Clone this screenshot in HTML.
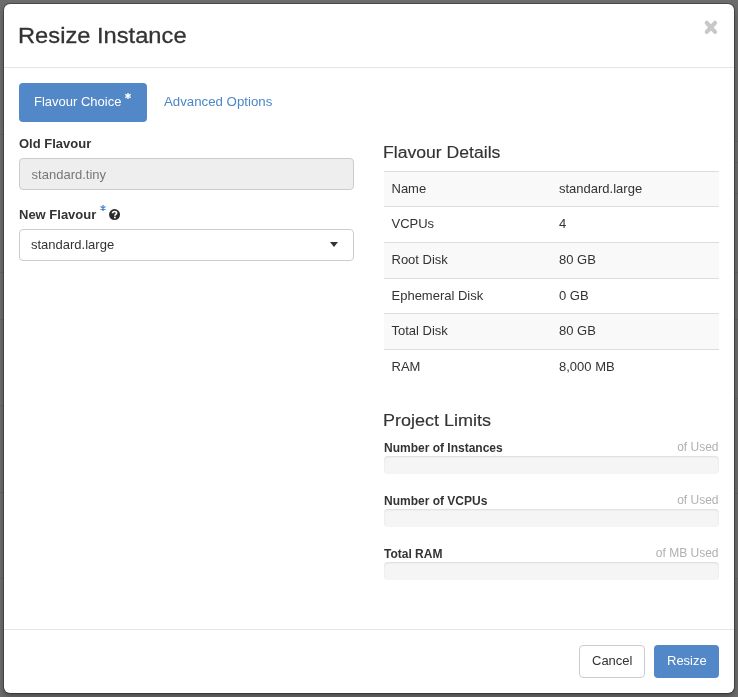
<!DOCTYPE html>
<html><head><meta charset="utf-8">
<style>
html,body{margin:0;padding:0;}
body{will-change:transform;width:738px;height:697px;background:#6c6c6c;position:relative;overflow:hidden;font-family:"Liberation Sans",sans-serif;color:#333;}
.a{position:absolute;white-space:nowrap;}
.bgl{position:absolute;width:20px;height:1px;background:rgba(0,0,0,.09);}
.modal{position:absolute;left:4px;top:4px;width:730px;height:689px;background:#fff;border-radius:6px;box-shadow:0 0 0 1px rgba(0,0,0,.3),0 4px 6px rgba(0,0,0,.3);}
.hl{position:absolute;left:4px;width:730px;height:1px;background:#e5e5e5;}
.title{font-size:22.5px;line-height:30px;color:#333;-webkit-text-stroke:0.3px #333;transform:scaleX(1.053);transform-origin:0 0;}
.btnp{position:absolute;background:#5287c8;border-radius:4px;}
.t13{font-size:13px;line-height:18px;}
.b13{font-size:13px;line-height:18px;font-weight:bold;color:#333;}
.b12{font-size:12px;line-height:16px;font-weight:bold;color:#333;}
.h4{font-size:16px;line-height:22px;color:#333;transform:scaleX(1.1);transform-origin:0 0;-webkit-text-stroke:0.15px #333;}
.inp{position:absolute;box-sizing:border-box;border:1px solid #ccc;border-radius:4px;}
.row{position:absolute;left:384px;width:335px;box-sizing:border-box;border-top:1px solid #ddd;}
.prog{position:absolute;left:384px;width:335px;height:18px;background:#f5f5f5;border-radius:4px;box-shadow:inset 0 1px 2px rgba(0,0,0,.1);}
.used{font-size:12px;line-height:16px;color:#b0b0b0;right:19.5px;}
.btn{position:absolute;box-sizing:border-box;border-radius:4px;top:645px;height:33px;}
</style></head>
<body>
<div class="bgl" style="left:0;top:134px"></div><div class="bgl" style="left:0;top:272px"></div><div class="bgl" style="left:0;top:319px"></div><div class="bgl" style="left:0;top:405px"></div><div class="bgl" style="left:0;top:492px"></div><div class="bgl" style="left:0;top:578px"></div><div class="bgl" style="right:0;top:141px"></div><div class="bgl" style="right:0;top:162px"></div><div class="bgl" style="right:0;top:193px"></div><div class="bgl" style="right:0;top:272px"></div><div class="bgl" style="right:0;top:319px"></div><div class="bgl" style="right:0;top:398px"></div><div class="bgl" style="right:0;top:493px"></div><div class="bgl" style="right:0;top:578px"></div>
<div class="modal"></div>
<!-- header -->
<div class="a title" style="left:17.8px;top:20.6px;">Resize Instance</div>
<svg class="a" style="left:700px;top:17.4px" width="22" height="22" viewBox="0 0 22 22"><path d="M6.8 5.8 L15 14.9 M15 5.8 L6.8 14.9" stroke="#c8c8c8" stroke-width="4.2" stroke-linecap="round"/></svg>
<div class="hl" style="top:67px"></div>

<!-- tabs -->
<div class="btnp" style="left:19px;top:83px;width:128px;height:39px;"></div>
<div class="a t13" style="left:34px;top:93px;color:#fff;">Flavour Choice</div>
<svg class="a" style="left:122px;top:90px" width="12" height="12" viewBox="0 0 12 12"><g stroke="#fff" stroke-width="1.35" stroke-linecap="butt"><path d="M6 2.9V9.1M3.3 4.45L8.7 7.55M3.3 7.55L8.7 4.45"/></g></svg>
<div class="a t13" style="left:164px;top:93px;color:#4a86c8;font-size:13.25px;">Advanced Options</div>

<!-- left column -->
<div class="a b13" style="left:19px;top:135px;">Old Flavour</div>
<div class="inp" style="left:19px;top:158px;width:335px;height:32px;background:#eee;"></div>
<div class="a t13" style="left:31.6px;top:166px;color:#777;">standard.tiny</div>

<div class="a b13" style="left:19px;top:206px;">New Flavour</div>
<svg class="a" style="left:96.5px;top:202px" width="12" height="12" viewBox="0 0 12 12"><g stroke="#4a86c8" stroke-width="1.3" stroke-linecap="butt"><path d="M6 3.1V8.9M3.5 4.55L8.5 7.45M3.5 7.45L8.5 4.55"/></g></svg>
<svg class="a" style="left:109px;top:208.7px" width="12" height="12" viewBox="0 0 12 12"><circle cx="5.55" cy="5.55" r="5.5" fill="#2b2b2b"/><path d="M3.6 4.3C3.6 3.0 4.5 2.5 5.6 2.5C6.8 2.5 7.6 3.2 7.6 4.1C7.6 5.3 5.9 5.4 5.9 6.8" fill="none" stroke="#fff" stroke-width="1.7"/><rect x="5" y="7.7" width="1.8" height="1.6" fill="#fff"/></svg>
<div class="inp" style="left:19px;top:229px;width:335px;height:32px;background:#fff;"></div>
<div class="a t13" style="left:31px;top:236px;color:#333;">standard.large</div>
<svg class="a" style="left:330px;top:242px" width="8" height="5" viewBox="0 0 8 5"><path d="M0 0 L8 0 L4 5 Z" fill="#333"/></svg>

<!-- right column -->
<div class="a h4" style="left:383px;top:142px;">Flavour Details</div>
<div class="row" style="top:171px;height:36px;background:#f9f9f9;"></div>
<div class="row" style="top:206px;height:36px;"></div>
<div class="row" style="top:242px;height:36px;background:#f9f9f9;"></div>
<div class="row" style="top:278px;height:36px;"></div>
<div class="row" style="top:313px;height:36px;background:#f9f9f9;"></div>
<div class="row" style="top:349px;height:36px;"></div>

<div class="a t13" style="left:391.5px;top:180px;">Name</div>
<div class="a t13" style="left:559px;top:180px;">standard.large</div>
<div class="a t13" style="left:391.5px;top:215px;">VCPUs</div>
<div class="a t13" style="left:559px;top:215px;">4</div>
<div class="a t13" style="left:391.5px;top:251px;">Root Disk</div>
<div class="a t13" style="left:559px;top:251px;">80 GB</div>
<div class="a t13" style="left:391.5px;top:287px;">Ephemeral Disk</div>
<div class="a t13" style="left:559px;top:287px;">0 GB</div>
<div class="a t13" style="left:391.5px;top:322px;">Total Disk</div>
<div class="a t13" style="left:559px;top:322px;">80 GB</div>
<div class="a t13" style="left:391.5px;top:358px;">RAM</div>
<div class="a t13" style="left:559px;top:358px;">8,000 MB</div>

<div class="a h4" style="left:383px;top:410px;transform:scaleX(1.125);">Project Limits</div>

<div class="a b12" style="left:384px;top:440px;">Number of Instances</div>
<div class="a used" style="top:439px;">of Used</div>
<div class="prog" style="top:456px;"></div>

<div class="a b12" style="left:384px;top:493px;">Number of VCPUs</div>
<div class="a used" style="top:492px;">of Used</div>
<div class="prog" style="top:509px;"></div>

<div class="a b12" style="left:384px;top:546px;">Total RAM</div>
<div class="a used" style="top:545px;">of MB Used</div>
<div class="prog" style="top:562px;"></div>

<!-- footer -->
<div class="hl" style="top:629px"></div>
<div class="btn" style="left:579px;width:66px;border:1px solid #ccc;background:#fff;"></div>
<div class="a t13" style="left:592px;top:652px;color:#333;">Cancel</div>
<div class="btn" style="left:654px;width:65px;background:#5287c8;"></div>
<div class="a t13" style="left:667px;top:652px;color:#fff;">Resize</div>
</body></html>
